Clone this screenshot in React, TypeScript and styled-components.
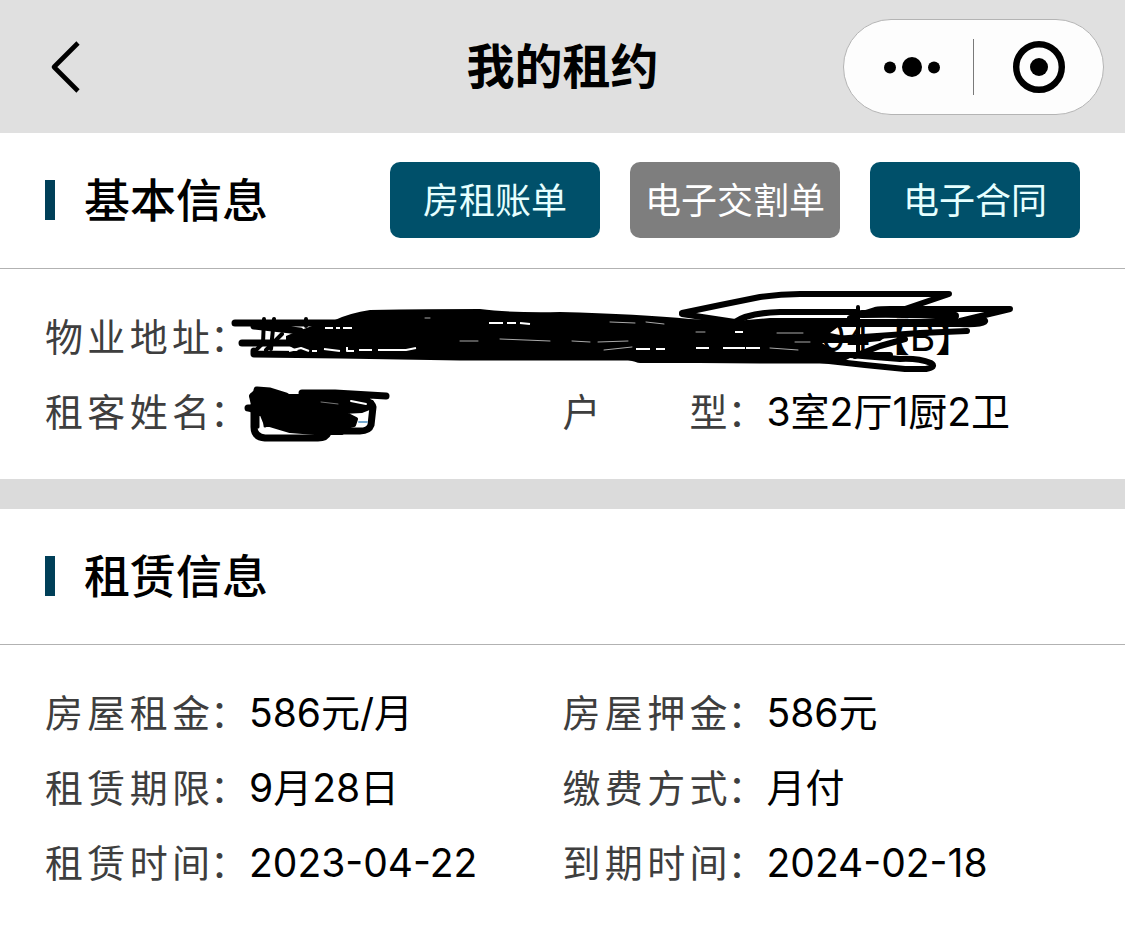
import React from "react";
import styled, { createGlobalStyle } from "styled-components";

const GlobalStyle = createGlobalStyle`
  * { box-sizing: border-box; }
  body {
    margin: 0;
    background: #fff;
    color: #000;
    font-family: Inter, "Noto Sans CJK SC", sans-serif;
  }
  button { font-family: inherit; border: 0; padding: 0; cursor: pointer; }
  h1, h2, dl, dd { margin: 0; }
`;

const NavBar = styled.header`
  display: grid;
  grid-template-columns: 1fr auto 1fr;
  align-items: center;
  height: 133px;
  padding: 0 21px;
  background: #e0e0e0;
`;

const BackButton = styled.button`
  display: flex;
  align-items: center;
  justify-content: center;
  justify-self: start;
  width: 88px;
  height: 88px;
  background: none;
`;

const PageTitle = styled.h1`
  font-size: 48px;
  line-height: 64px;
  font-weight: 700;
`;

const Capsule = styled.div`
  display: flex;
  align-items: center;
  justify-self: end;
  width: 261px;
  height: 96px;
  border: 1px solid #b4b4b4;
  border-radius: 48px;
  background: #fdfdfd;
`;

const CapsuleButton = styled.button`
  display: flex;
  flex: 1;
  align-items: center;
  justify-content: center;
  height: 100%;
  background: none;
`;

const CapsuleDivider = styled.span`
  width: 1px;
  height: 56px;
  background: #7a7a7a;
`;

const Section = styled.section`
  & + & { border-top: 30px solid #dbdbdb; }
`;

const SectionHeader = styled.div`
  display: flex;
  align-items: center;
  justify-content: space-between;
  height: 136px;
  padding: 0 45px 2px;
  border-bottom: 1px solid #b2b2b2;
`;

const SectionTitle = styled.h2`
  display: flex;
  align-items: center;
  gap: 29px;
  font-size: 46px;
  line-height: 60px;
  font-weight: 500;

  &::before {
    content: "";
    width: 10px;
    height: 40px;
    background: #003f58;
  }
`;

const Actions = styled.div`
  display: flex;
  gap: 30px;
`;

const ActionButton = styled.button<{ $muted?: boolean }>`
  width: 210px;
  height: 76px;
  padding-top: 3px;
  border-radius: 10px;
  background: ${(p) => (p.$muted ? "#7e7e7e" : "#00506a")};
  color: ${(p) => (p.$muted ? "#fff" : "#e6ffff")};
  font-size: 36px;
  line-height: 48px;
`;

const Details = styled.dl`
  display: grid;
  grid-template-columns: 1fr 1fr;
  padding: 30px 45px;
`;

const Field = styled.div<{ $wide?: boolean }>`
  display: flex;
  align-items: center;
  gap: 1px;
  height: 75px;
  grid-column: ${(p) => (p.$wide ? "1 / -1" : "auto")};
  line-height: 56px;
  white-space: nowrap;
`;

const Term = styled.dt`
  display: flex;
  color: #3e3e3e;
  font-size: 38px;
`;

const TermText = styled.span`
  width: 165px;
  text-align: justify;
  text-align-last: justify;
`;

const Value = styled.dd`
  position: relative;
  font-size: 39px;
`;

const AddressTail = styled.span`
  display: block;
  padding-left: 572px;
`;

const Scribble = styled.svg`
  position: absolute;
  left: -24px;
  fill: none;
  stroke: #000;
  stroke-width: 7;
  stroke-linecap: round;
  stroke-linejoin: round;
`;

const AddressScribble = styled(Scribble)`
  top: -29px;
`;

const NameScribble = styled(Scribble)`
  top: -32px;
`;

const AddressMask = () => (
  <AddressScribble width="800" height="100" viewBox="225 280 800 100" aria-hidden="true">
    <path
      fill="#000"
      stroke="none"
      d="M286 336L298 331L312 326L335 320Q350 313 370 310Q430 309 480 309Q510 313 560 312Q640 314 690 319Q715 320 735 321L770 318H850V327H838L830 333L845 336L875 335L890 334L880 341L860 343H822L832 350L850 358L840 363H640L620 358H340L300 352L286 344Z"
    />
    <path d="M235 323H340M254 326L300 331M242 343H292M254 351V354L340 355L460 357H635M638 359L760 360L840 360" />
    <path d="M682 313Q720 305 760 297Q780 294 800 294H949L905 309" strokeWidth="6" />
    <path d="M682 314L735 322Q748 313 780 312H856M850 318L875 310Q880 309 890 309H1010L960 321" strokeWidth="6" />
    <path d="M862 314Q910 313 955 316M840 323H960Q980 324 984 321" strokeWidth="8" />
    <path d="M967 331L920 333L820 340M905 339L880 346L855 356M890 355H820" strokeWidth="6" />
    <path d="M820 360L865 365L905 369H926Q937 367 931 363Q918 358 900 359L850 355" strokeWidth="6" />
    <path d="M858 307V352M264 319L263 343L254 352M274 319L271 349M282 334L266 350M306 319V326M310 343V352M318 348L325 352M344 328V352M356 344V352" strokeWidth="4" />
    <path
      stroke="#fff"
      strokeWidth="2"
      strokeLinecap="butt"
      d="M325 328H333M336 328H340M343 328H352M289 351L301 348L309 351M312 351H317M324 349L340 351M347 347V351H354M359 350H372M378 350H406L416 348M489 323H503M507 323H516M520 323L530 324M636 349H650M656 349H665M696 348H709M723 348H745M735 332H743M746 348H760"
    />
    <path
      stroke="#aaa"
      strokeWidth="1"
      d="M425 318H430M460 341H478M500 339L550 341M572 341L590 342M598 342L628 341M610 322L635 323M646 322L664 324M604 350L632 347M696 332H705M777 333H803M795 342H810M770 348L798 350"
    />
  </AddressScribble>
);

const NameMask = () => (
  <NameScribble width="180" height="70" viewBox="225 380 180 70" aria-hidden="true">
    <path
      fill="#000"
      strokeWidth="4"
      d="M257 390L270 391L288 396H300L302 393H335L350 396L372 402V407L362 411L342 412L356 419L354 425L346 427L342 433H315L290 431L270 425H266L262 415L248 409L253 405L251 396Z"
    />
    <path d="M257 390L270 391L286 396M302 393L335 393L386 396M350 397Q372 400 373 407L371 425Q369 431 360 431H338M253 396H262M248 408H265M254 410V427Q254 437 265 438H318Q326 438 328 433" />
    <path d="M258 412V427M265 423V426" strokeWidth="3" />
    <path d="M351 401L366 404" stroke="#fff" strokeWidth="2" />
    <path d="M321 402L338 404" stroke="#777" strokeWidth="1" />
    <path d="M359 422H367" stroke="#75a9d0" strokeWidth="2" />
  </NameScribble>
);

interface FieldRowProps {
  label: string;
  wide?: boolean;
  children: React.ReactNode;
}

const FieldRow = ({ label, wide, children }: FieldRowProps) => (
  <Field $wide={wide}>
    <Term>
      <TermText>{label}</TermText>：
    </Term>
    <Value>{children}</Value>
  </Field>
);

export default function App() {
  return (
    <>
      <GlobalStyle />
      <NavBar>
        <BackButton aria-label="返回">
          <svg width="32" height="54" viewBox="0 0 32 54" fill="none" stroke="#000" strokeWidth="4.6" strokeLinejoin="round">
            <path d="M29 3L5 27L29 51" />
          </svg>
        </BackButton>
        <PageTitle>我的租约</PageTitle>
        <Capsule>
          <CapsuleButton aria-label="更多">
            <svg width="64" height="20" viewBox="-6 0 64 20">
              <circle cx="7" cy="10.5" r="6" />
              <circle cx="29" cy="10" r="10" />
              <circle cx="51" cy="10.5" r="6" />
            </svg>
          </CapsuleButton>
          <CapsuleDivider />
          <CapsuleButton aria-label="关闭">
            <svg width="52" height="52" viewBox="0 0 52 52">
              <circle cx="26" cy="26" r="22.8" fill="none" stroke="#000" strokeWidth="6.4" />
              <circle cx="26" cy="26" r="9" />
            </svg>
          </CapsuleButton>
        </Capsule>
      </NavBar>
      <main>
        <Section>
          <SectionHeader>
            <SectionTitle>基本信息</SectionTitle>
            <Actions>
              <ActionButton>房租账单</ActionButton>
              <ActionButton $muted>电子交割单</ActionButton>
              <ActionButton>电子合同</ActionButton>
            </Actions>
          </SectionHeader>
          <Details>
            <FieldRow label="物业地址" wide>
              <AddressTail>04【B】</AddressTail>
              <AddressMask />
            </FieldRow>
            <FieldRow label="租客姓名">
              <NameMask />
            </FieldRow>
            <FieldRow label="户 型">3室2厅1厨2卫</FieldRow>
          </Details>
        </Section>
        <Section>
          <SectionHeader>
            <SectionTitle>租赁信息</SectionTitle>
          </SectionHeader>
          <Details>
            <FieldRow label="房屋租金">586元/月</FieldRow>
            <FieldRow label="房屋押金">586元</FieldRow>
            <FieldRow label="租赁期限">9月28日</FieldRow>
            <FieldRow label="缴费方式">月付</FieldRow>
            <FieldRow label="租赁时间">2023-04-22</FieldRow>
            <FieldRow label="到期时间">2024-02-18</FieldRow>
          </Details>
        </Section>
      </main>
    </>
  );
}
